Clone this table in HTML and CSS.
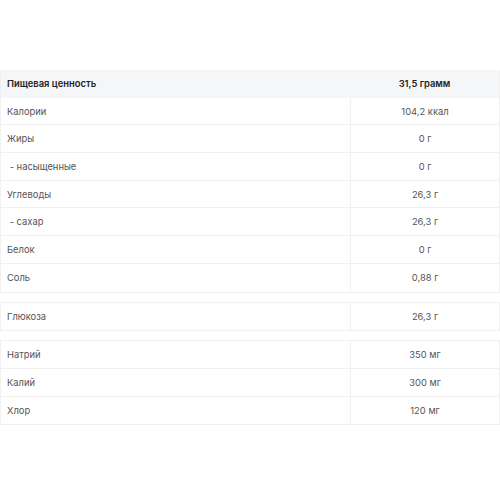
FILE: index.html
```html
<!DOCTYPE html>
<html lang="ru">
<head>
<meta charset="utf-8">
<link rel="stylesheet" href="styles.css">
</head>
<body>
<div class="page">
  <div class="tbl">
    <div class="row head"><div class="name">Пищевая ценность</div><div class="val">31,5 грамм</div></div>
    <div class="row"><div class="name">Калории</div><div class="val">104,2 ккал</div></div>
    <div class="row"><div class="name">Жиры</div><div class="val">0 г</div></div>
    <div class="row"><div class="name">&nbsp;- насыщенные</div><div class="val">0 г</div></div>
    <div class="row"><div class="name">Углеводы</div><div class="val">26,3 г</div></div>
    <div class="row"><div class="name">&nbsp;- сахар</div><div class="val">26,3 г</div></div>
    <div class="row"><div class="name">Белок</div><div class="val">0 г</div></div>
    <div class="row"><div class="name">Соль</div><div class="val">0,88 г</div></div>
  </div>
  <div class="tbl">
    <div class="row"><div class="name">Глюкоза</div><div class="val">26,3 г</div></div>
  </div>
  <div class="tbl">
    <div class="row"><div class="name">Натрий</div><div class="val">350 мг</div></div>
    <div class="row"><div class="name">Калий</div><div class="val">300 мг</div></div>
    <div class="row"><div class="name">Хлор</div><div class="val">120 мг</div></div>
  </div>
</div>
</body>
</html>
```
FILE: styles.css
```css
html, body {
  margin: 0;
  padding: 0;
  background: #fff;
}
.page {
  padding-top: 70px;
  display: flex;
  flex-direction: column;
  gap: 9px;
  font-family: Inter, "Noto Sans", sans-serif;
  font-size: 9.4px;
  color: #555;
}
.tbl {
  border: 1px solid #f1f1f1;
  border-top: none;
  width: 500px;
  box-sizing: border-box;
}
.tbl:not(:first-child) {
  border-top: 1px solid #f1f1f1;
}
.row {
  display: grid;
  grid-template-columns: 349px 1fr;
  height: 27.7px;
  box-sizing: border-box;
  border-bottom: 1px solid #f1f1f1;
}
.row:last-child {
  border-bottom: none;
}
.name {
  display: flex;
  align-items: center;
  padding-left: 6px;
  white-space: pre;
}
.val {
  display: flex;
  align-items: center;
  justify-content: center;
  border-left: 1px solid #f1f1f1;
}
.head {
  background: #f5f6f8;
  color: #222;
  font-weight: 600;
  border-bottom: none;
}
.head .val {
  border-left: none;
}
```
